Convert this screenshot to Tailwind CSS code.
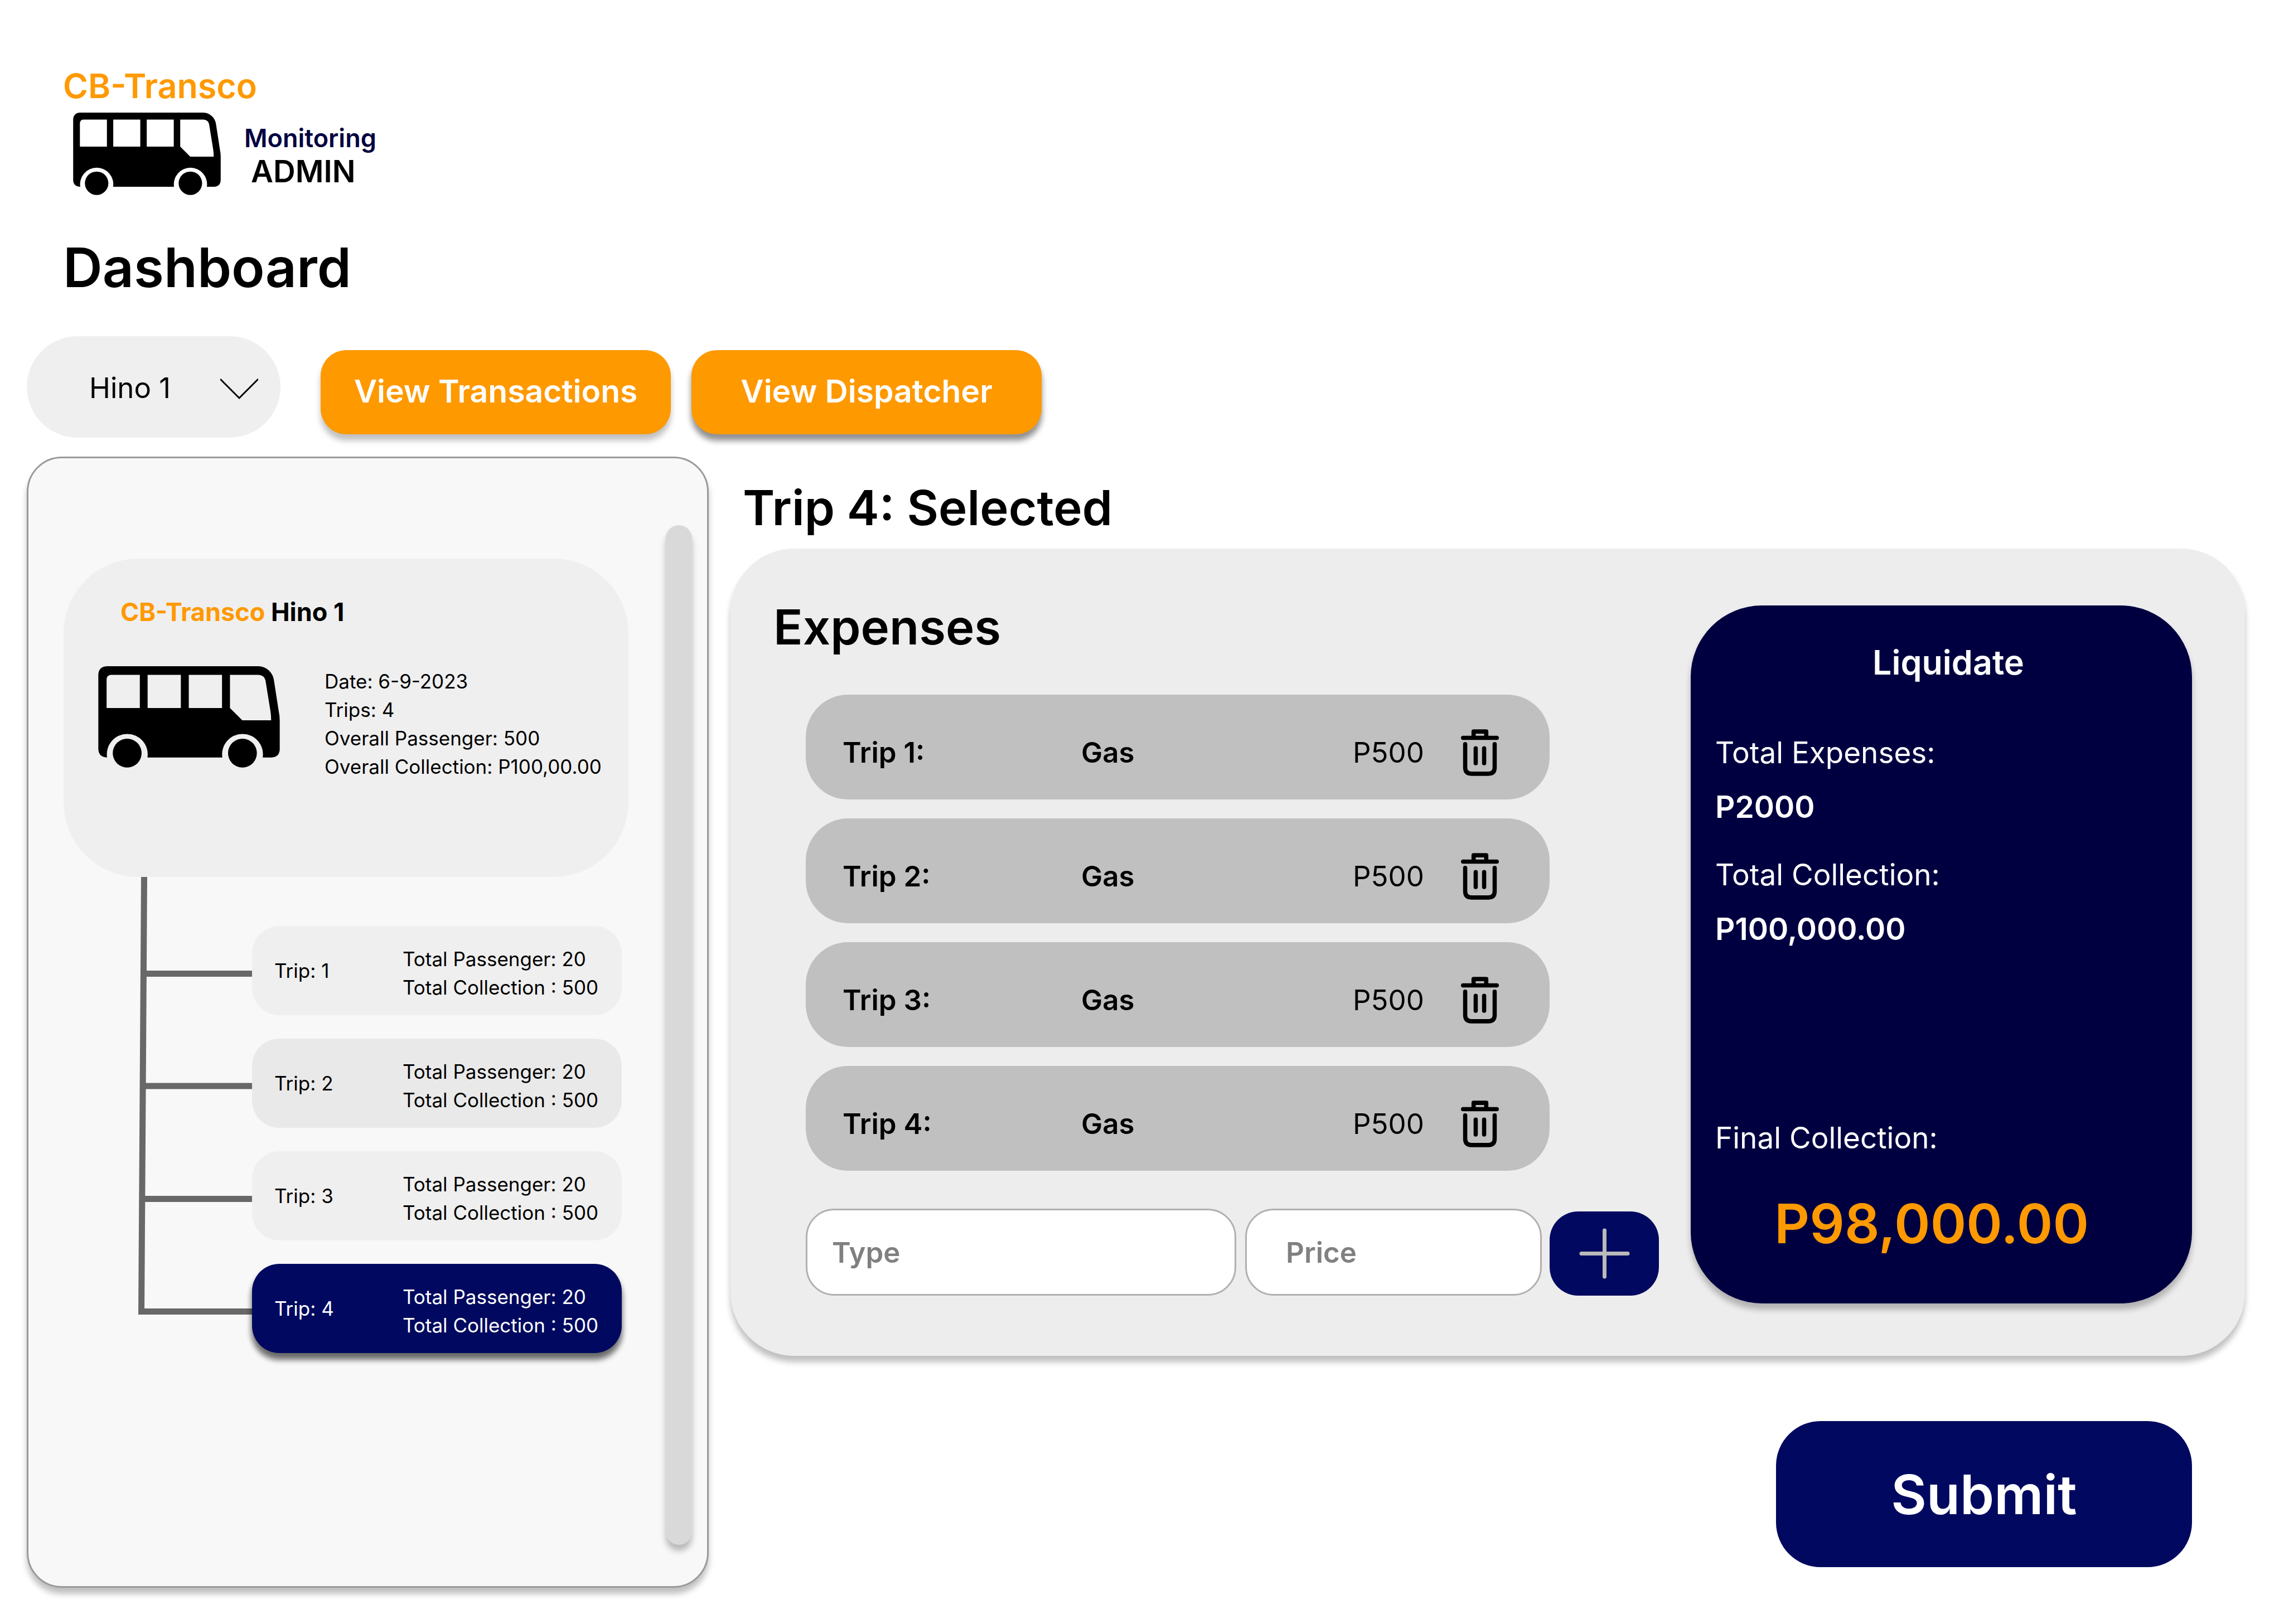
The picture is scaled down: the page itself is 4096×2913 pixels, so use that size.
<!DOCTYPE html>
<html lang="en">
<head>
<meta charset="utf-8">
<title>CB-Transco Monitoring</title>
<script src="https://cdn.jsdelivr.net/npm/@tailwindcss/browser@4"></script>
</head>
<body class="min-h-screen bg-white font-['Inter',sans-serif] text-black">
<svg class="hidden" aria-hidden="true">
  <symbol id="bus" viewBox="71 43 1119 626">
    <path fill-rule="evenodd" d="M123 43H1060C1108 45 1148 82 1154 128L1184 322Q1190 350 1190 378V556Q1188 602 1140 606H1085A126 126 0 1 0 836 606H374A126 126 0 1 0 125 606Q73 604 71 555V95Q73 46 123 43ZM122 301H327V96H148Q124 98 122 122ZM375 96V301H580V96ZM629 96V301H834V96ZM883 96V301L959 377H1137Q1137 348 1133 322L1102 130Q1096 100 1060 96Z"/>
    <circle cx="249" cy="579" r="89"/>
    <circle cx="960" cy="579" r="89"/>
  </symbol>
  <symbol id="trash" viewBox="72 81 288 353">
    <g fill="none" stroke="currentColor" stroke-width="32" stroke-linecap="round" stroke-linejoin="round">
      <path d="M88 145H344M168 145V97H264V145M104 193V370Q104 418 152 418H280Q328 418 328 370V193M184 225V338M248 225V338"/>
    </g>
  </symbol>
</svg>

<header class="pt-[122px] pl-[113px]">
  <p class="text-[61px] leading-[64px] font-semibold text-[#ff9900]">CB-Transco</p>
  <div class="mt-4 ml-[18px] flex items-center gap-[42px]">
    <svg class="h-[148px] w-[265px]" role="img" aria-label="Bus"><use href="#bus"/></svg>
    <div class="pt-1">
      <p class="text-[45px] leading-[58px] font-semibold text-[#000040]">Monitoring</p>
      <p class="pl-3 text-[55px] leading-[60px] font-semibold">ADMIN</p>
    </div>
  </div>
  <h1 class="mt-20 text-[98px] leading-[100px] font-semibold">Dashboard</h1>
</header>

<nav class="mt-[73px] flex items-end px-12">
  <div class="relative mr-[72px]">
    <select aria-label="Vehicle" class="h-[182px] w-[455px] appearance-none rounded-full bg-[#efefef] pt-1 pl-28 text-[51px]">
      <option>Hino 1</option>
    </select>
    <svg class="pointer-events-none absolute top-[75px] right-10 h-[39px] w-[68px]" viewBox="0 0 68 39" fill="none" stroke="black" stroke-width="3"><path d="M0 2L34 36L68 2"/></svg>
  </div>
  <div class="mb-[6px] flex gap-[37px]">
    <button class="h-[151px] w-[628px] rounded-[46px] bg-[#ff9900] pb-1 text-[57px] font-semibold text-white shadow-[0_11px_11px_rgba(0,0,0,0.25)]">View Transactions</button>
    <button class="h-[151px] w-[628px] rounded-[46px] bg-[#ff9900] pb-1 text-[57px] font-semibold text-white shadow-[0_11px_11px_rgba(0,0,0,0.25),0_11px_11px_rgba(0,0,0,0.25)]">View Dispatcher</button>
  </div>
</nav>

<main class="mt-[34px] flex items-start gap-[39px] pr-[70px] pb-[66px] pl-12">
  <aside class="flex w-[1223px] shrink-0 gap-[67px] rounded-[63px] border-[3px] border-[#9a9a9a] bg-[#f8f8f8] pr-[27px] pl-[63px] shadow-[0_11px_11px_rgba(0,0,0,0.25)]">
    <div class="flex-1 pt-[180px]">
      <section class="rounded-[134px] bg-[#efefef] pt-[64px] pb-[172px] pl-[62px]">
        <h2 class="pl-[40px] text-[45px] leading-[64px] font-bold"><span class="text-[#ff9900]">CB-Transco</span> Hino 1</h2>
        <div class="mt-[65px] flex gap-20">
          <svg class="h-[182px] w-[326px]" role="img" aria-label="Bus"><use href="#bus"/></svg>
          <div class="pt-[2px] text-[35px] leading-[51px]">
            <p>Date: 6-9-2023</p>
            <p>Trips: 4</p>
            <p>Overall Passenger: 500</p>
            <p>Overall Collection: P100,00.00</p>
          </div>
        </div>
      </section>
      <div class="flex">
        <svg class="h-[785px] w-[338px] shrink-0" viewBox="0 0 338 785" fill="none" stroke="#686868" stroke-width="11" aria-hidden="true">
          <path d="M144.500 0L139.500 785M140 173.500H338M140 375H338M140 577.500H338M134 779.500H338"/>
        </svg>
        <div class="mr-3 flex flex-1 flex-col gap-[42px] pt-[88px] text-[35px] leading-[51px]">
          <button class="flex h-40 items-center rounded-[49px] bg-[#efefef] pl-10 text-left">
            <span class="w-[230px]">Trip: 1</span>
            <span class="pt-[10px]">Total Passenger: 20<br>Total Collection : 500</span>
          </button>
          <button class="flex h-40 items-center rounded-[49px] bg-[#e9e9e9] pl-10 text-left">
            <span class="w-[230px]">Trip: 2</span>
            <span class="pt-[10px]">Total Passenger: 20<br>Total Collection : 500</span>
          </button>
          <button class="flex h-40 items-center rounded-[49px] bg-[#efefef] pl-10 text-left">
            <span class="w-[230px]">Trip: 3</span>
            <span class="pt-[10px]">Total Passenger: 20<br>Total Collection : 500</span>
          </button>
          <button class="flex h-40 items-center rounded-[49px] bg-[#00095f] pl-10 text-left text-white shadow-[0_11px_11px_rgba(0,0,0,0.25),0_11px_11px_rgba(0,0,0,0.25),0_11px_11px_rgba(0,0,0,0.25)]">
            <span class="w-[230px]">Trip: 4</span>
            <span class="pt-[10px]">Total Passenger: 20<br>Total Collection : 500</span>
          </button>
        </div>
      </div>
    </div>
    <div class="pt-[120px] pb-[74px]">
      <div class="h-[1829px] w-[47px] rounded-full bg-[#d9d9d9] shadow-[0_11px_11px_rgba(0,0,0,0.25)]"></div>
    </div>
  </aside>

  <form class="flex min-w-0 flex-1 flex-col pt-11">
    <h2 class="pl-[22px] text-[87px] leading-[96px] font-semibold">Trip 4: Selected</h2>
    <div class="mt-[25px] flex gap-[57px] rounded-[114px] bg-[#ededed] pr-[95px] pl-[135px] shadow-[0_11px_11px_rgba(0,0,0,0.25)]">
      <section class="min-w-0 flex-1 pt-[93px] pb-[108px]">
        <h3 class="-ml-[58px] text-[87px] leading-[96px] font-semibold">Expenses</h3>
        <ul class="mt-[73px] mr-[196px] flex flex-col gap-[34px] text-[51px]">
          <li class="flex h-[188px] items-center rounded-[76px] bg-[#c0c0c0] pt-5 pr-[91px] pl-[66px]">
            <span class="w-[428px] font-semibold">Trip 1:</span>
            <span class="flex-1 font-semibold">Gas</span>
            <span class="w-[194px]">P500</span>
            <button type="button" aria-label="Delete trip 1"><svg class="h-[84px] w-[68px]"><use href="#trash"/></svg></button>
          </li>
          <li class="flex h-[188px] items-center rounded-[76px] bg-[#c0c0c0] pt-5 pr-[91px] pl-[66px]">
            <span class="w-[428px] font-semibold">Trip 2:</span>
            <span class="flex-1 font-semibold">Gas</span>
            <span class="w-[194px]">P500</span>
            <button type="button" aria-label="Delete trip 2"><svg class="h-[84px] w-[68px]"><use href="#trash"/></svg></button>
          </li>
          <li class="flex h-[188px] items-center rounded-[76px] bg-[#c0c0c0] pt-5 pr-[91px] pl-[66px]">
            <span class="w-[428px] font-semibold">Trip 3:</span>
            <span class="flex-1 font-semibold">Gas</span>
            <span class="w-[194px]">P500</span>
            <button type="button" aria-label="Delete trip 3"><svg class="h-[84px] w-[68px]"><use href="#trash"/></svg></button>
          </li>
          <li class="flex h-[188px] items-center rounded-[76px] bg-[#c0c0c0] pt-5 pr-[91px] pl-[66px]">
            <span class="w-[428px] font-semibold">Trip 4:</span>
            <span class="flex-1 font-semibold">Gas</span>
            <span class="w-[194px]">P500</span>
            <button type="button" aria-label="Delete trip 4"><svg class="h-[84px] w-[68px]"><use href="#trash"/></svg></button>
          </li>
        </ul>
        <div class="mt-[68px] flex items-end">
          <input type="text" aria-label="Type" placeholder="Type" class="mr-4 h-[156px] w-0 flex-1 rounded-[51px] border-[3px] border-[#b0b0b0] bg-white px-[44px] text-[51px] font-semibold placeholder:text-[#808080]">
          <input type="text" aria-label="Price" placeholder="Price" class="mr-[14px] h-[156px] w-[532px] rounded-[51px] border-[3px] border-[#b0b0b0] bg-white px-[70px] text-[51px] font-semibold placeholder:text-[#808080]">
          <button type="button" aria-label="Add expense" class="flex h-[151px] w-[196px] items-center justify-center rounded-[51px] bg-[#00095f]">
            <svg class="size-[91px]" viewBox="0 0 91 91" stroke="#bababa" stroke-width="7" stroke-linecap="round"><path d="M4 45.500H87M45.500 4V87"/></svg>
          </button>
        </div>
      </section>
      <section class="mt-[102px] w-[899px] shrink-0 self-start rounded-[128px] bg-[#000040] pt-[70px] pb-[87px] pl-11 text-white shadow-[0_11px_11px_rgba(0,0,0,0.25)]">
        <h3 class="pl-[282px] text-[61px] leading-[64px] font-semibold">Liquidate</h3>
        <dl class="leading-[64px]">
          <dt class="mt-[98px] text-[53px]">Total Expenses:</dt>
          <dd class="mt-[33px] text-[55px] font-semibold">P2000</dd>
          <dt class="mt-[58px] text-[53px]">Total Collection:</dt>
          <dd class="mt-[33px] text-[55px] font-semibold">P100,000.00</dd>
          <dt class="mt-[311px] text-[53px]">Final Collection:</dt>
          <dd class="mt-[66px] pl-[106px] text-[98px] leading-[112px] font-semibold text-[#ff9900]">P98,000.00</dd>
        </dl>
      </section>
    </div>
    <button type="submit" class="mt-[117px] mr-[95px] h-[262px] w-[746px] self-end rounded-[80px] bg-[#00095f] text-[98px] font-semibold text-white">Submit</button>
  </form>
</main>
</body>
</html>
